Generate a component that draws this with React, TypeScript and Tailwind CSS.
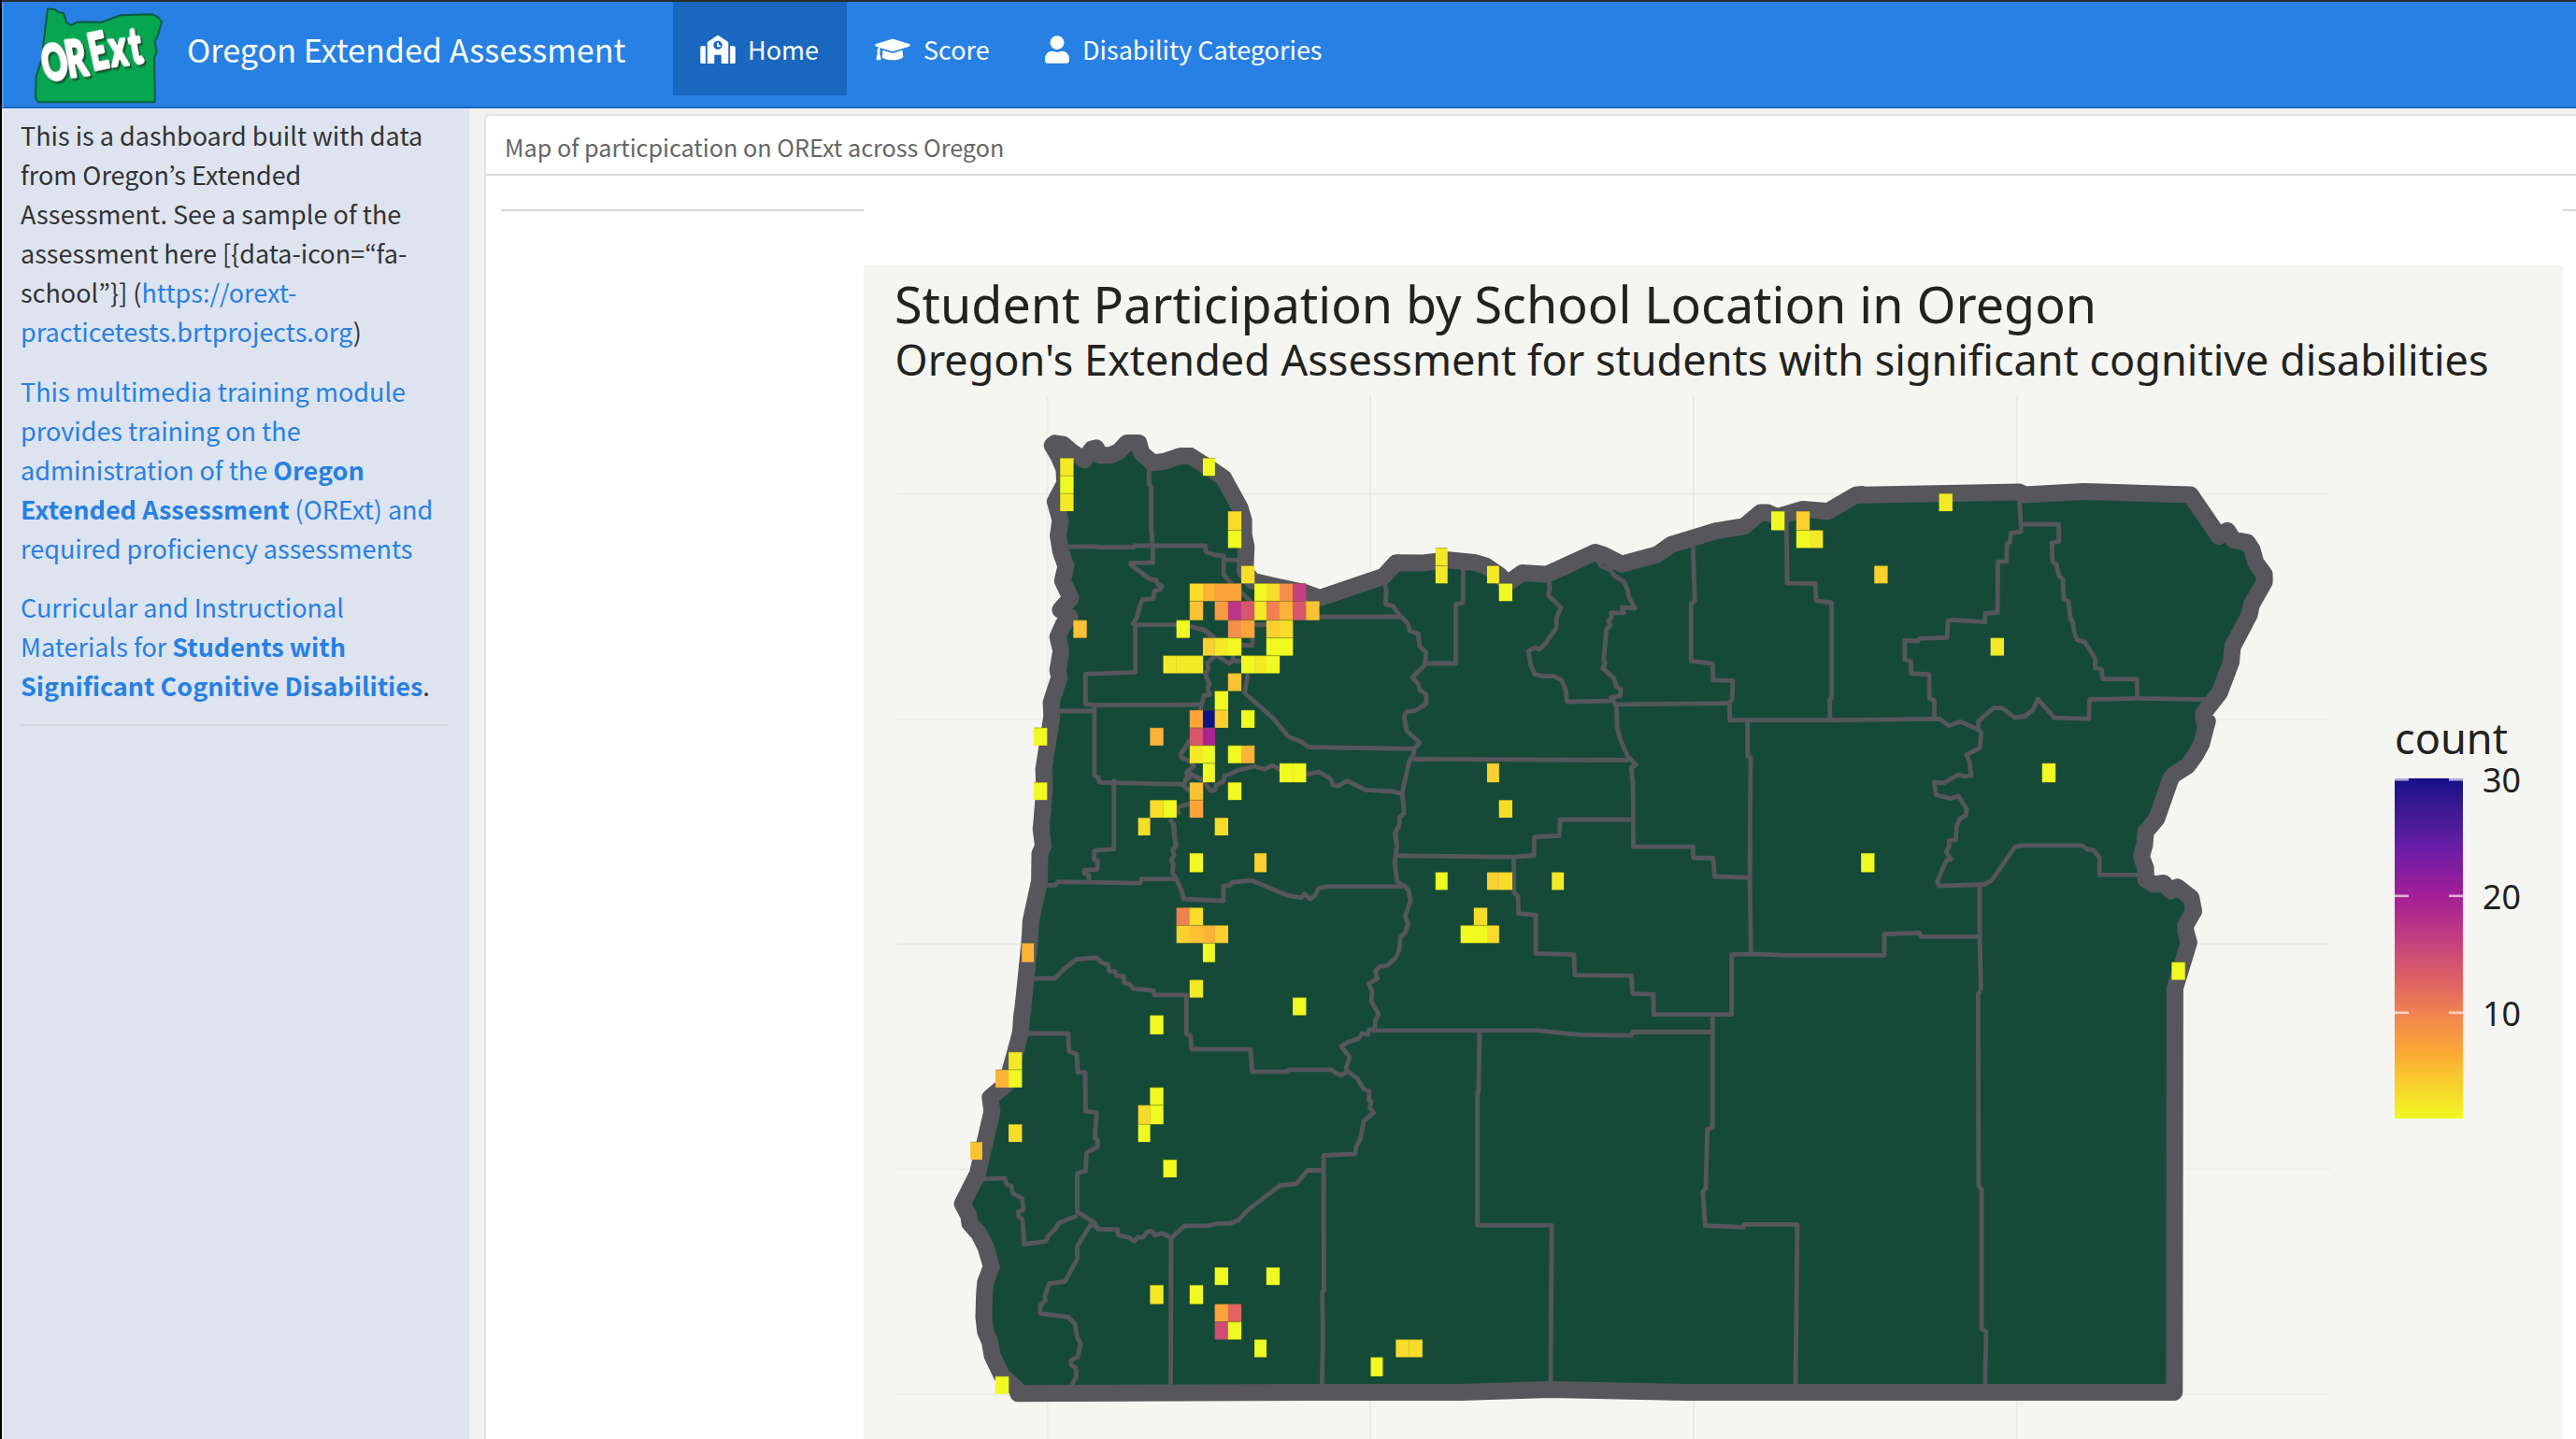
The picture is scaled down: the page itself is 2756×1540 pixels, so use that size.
import React from "react";
import { FaGraduationCap, FaSchool, FaUser } from "react-icons/fa";

type Frame = { x: number; y: number; sx: number; sy: number };

const NW: Frame = { x: 1000, y: 430, sx: 1568 / 620, sy: 3 };
const SW: Frame = { x: 1000, y: 880, sx: 2.8, sy: 1568 / 660 };
const MID: Frame = { x: 1500, y: 500, sx: 1568 / 620, sy: 2.45 };
const NE: Frame = { x: 1850, y: 480, sx: 1568 / 620, sy: 2.45 };
const SE: Frame = { x: 1400, y: 1060, sx: 1568 / 960, sy: 3 };
const METRO: Frame = { x: 1200, y: 600, sx: 3, sy: 3 };

const place = (f: Frame, pts: string) =>
  pts
    .trim()
    .split(/\s+/)
    .map((p) => {
      const [a, b] = p.split(",").map(Number);
      return `${(f.x + a / f.sx).toFixed(1)},${(f.y + b / f.sy).toFixed(1)}`;
    })
    .join(" ");

const OUTLINE = [
  place(
    NW,
    "325,133 348,137 370,160 405,187 425,152 437,148 448,172 475,172 498,160 520,132 552,132 560,165 590,196 620,192 665,174 692,174 740,210 782,245 826,340 836,380 836,425 843,465 840,545 860,575 920,592 1000,612 1042,630 1215,560 1248,517"
  ),
  place(
    MID,
    "60,251 125,243 195,250 225,258 262,282 285,305 325,277 392,281 523,223 545,230 595,254 690,229 728,203 850,167 925,155 970,119 990,119 1015,130 1085,110 1152,116 1228,73 1245,71"
  ),
  place(
    NE,
    "355,122 785,114 800,121 960,113 1248,121 1325,230 1348,215 1365,240 1402,246 1415,265 1425,300 1448,330 1448,350 1413,410 1408,435 1362,520 1358,560 1327,640 1283,695 1284,712 1294,715 1278,775 1262,803 1240,832 1203,855 1195,865 1157,970 1127,1005 1124,1040 1115,1070 1127,1100 1127,1130 1150,1143 1175,1139 1195,1160 1213,1150 1250,1178 1257,1213 1235,1250 1235,1265 1244,1295 1206,1415"
  ),
  place(SE, "1513,1290 660,1290 423,1281 265,1290 0,1290"),
  place(
    SW,
    "250,1452 245,1440 200,1405 172,1355 165,1320 152,1295 147,1258 149,1200 152,1170 170,1130 153,1080 132,1045 105,1020 102,1000 83,970 128,895 172,735 166,700 215,665 240,590 257,535 261,490 264,475 284,310 288,250 314,150 315,80 325,60 318,15"
  ),
  place(
    NW,
    "288,1370 297,1240 295,1180 317,1010 315,965 337,885 333,860 342,800 333,755 348,715 366,690 340,668 368,630 346,575 355,528 341,480 334,430 340,380 326,320 352,262 350,215 335,175 318,140"
  ),
].join(" ");

const COUNTIES: string[] = [
  place(NW, "580,200 580,265 586,272 586,410 590,462 590,517 530,517 530,523 583,570 600,572 603,585 615,592 608,603 594,607 592,632 562,635 555,655 548,690 537,712 543,717 543,868 408,874 408,970 432,974 720,972"),
  place(NW, "350,466 435,464 440,467 538,467 540,462 732,462 734,482 760,492 782,494 782,555 800,580 850,635 866,655"),
  place(NW, "782,508 822,508"),
  place(NW, "543,716 653,716 690,720 732,735 755,760"),
  place(METRO, "230,215 268,222 300,250"),
  place(METRO, "300,300 345,330 357,322 385,322"),
  place(METRO, "357,300 357,322"),
  place(METRO, "300,305 275,330 278,350 268,362 282,395 276,410 283,430 265,432 255,465 253,480"),
  place(METRO, "385,272 420,272 420,240"),
  place(METRO, "405,362 395,425 485,505 535,565 580,583 600,600"),
  place(METRO, "218,575 205,600 190,620 192,632 222,645 232,660 208,680 213,700 195,720"),
  place(METRO, "200,705 213,695 230,690 262,705"),
  place(METRO, "420,206 470,206"),
  place(NW, "338,993 432,993"),
  place(NW, "432,974 432,1200 442,1205 446,1222 670,1228 690,1250"),
  place(NW, "1035,690 1258,690"),
  place(NW, "680,1190 700,1198 727,1215 745,1248 757,1248 762,1230 780,1220 785,1200 800,1195 820,1183 865,1170 892,1180 915,1167 935,1182 1006,1196 1040,1188 1070,1210 1078,1230 1092,1234 1115,1217 1165,1246 1235,1251 1265,1258"),
  place(NW, "690,1290 655,1302 662,1325"),
  place(NW, "636,1340 648,1360 650,1400 654,1430"),
  place(SW, "714,0 717,30 723,60 713,70 717,85 708,97 715,105 712,128 725,145 740,175 746,195 865,200 865,162 885,160 890,152 950,148 1060,187 1098,192 1108,182 1125,196 1140,185 1150,168 1180,163 1400,163"),
  place(NW, "1215,570 1222,605 1220,650 1240,655 1258,685 1280,712 1285,735 1308,745 1312,785 1330,805 1326,845 1292,885 1308,905 1312,925 1330,940 1330,970 1300,992 1277,995 1270,1010 1277,1055 1312,1095 1297,1115 1297,1130 1285,1150 1265,1255 1270,1320 1258,1335 1258,1358"),
  place(NW, "1258,1358 1245,1385 1249,1420"),
  place(SW, "1393,5 1380,25 1385,60 1378,100 1385,150 1410,163 1420,175 1425,200 1410,238 1418,258 1410,280 1395,292 1392,325 1380,345 1355,365 1335,366 1320,378 1326,398 1300,410 1310,430 1308,455 1330,488 1320,505 1318,525 1300,528 1298,540 1280,537 1270,550 1240,558 1218,570 1243,597 1232,625 1240,635 1265,650 1285,678 1302,685 1300,705 1308,710 1303,725 1315,738 1285,760 1275,805 1262,825 1260,843 1165,847 1166,1190 1161,1195 1163,1310 1160,1430"),
  place(NW, "1430,535 1430,645 1410,650 1410,840 1330,840"),
  place(NW, "1012,1109 1297,1114"),
  place(NW, "1290,1148 1350,1148"),
  place(MID, "25,765 612,768"),
  place(SW, "330,160 362,160 370,151 615,155 620,144 722,144"),
  place(SW, "537,-110 537,68 478,72 478,95 488,98 487,120 448,122 448,130 462,135 462,150"),
  place(SW, "290,397 360,397 385,375 425,348 485,344 500,357 520,362 522,378 540,380 545,390 566,392 568,408 585,412 595,423 655,428 658,439 754,439 754,538 767,543 770,577 946,577 951,634 1055,634 1060,629 1190,629 1200,637 1217,643 1235,635"),
  place(SW, "265,537 400,537 402,582 426,590 428,635 451,636 452,735 485,738 480,803 488,808 488,825 455,840 452,887 427,892 427,990 478,1018 490,1035 548,1035 550,1050 580,1055 598,1065 608,1055 625,1055 635,1042 650,1039 660,1050 680,1045 695,1050 708,1058 748,1026 815,1026 848,1020 885,1020 910,1012 935,988 1035,923 1083,920 1117,885 1165,885"),
  place(SW, "140,907 210,905 215,920 230,925 234,943 262,957 266,985 250,990 252,1003 263,1010 268,1073 333,1065 340,1052 365,1030 370,1020 427,1000"),
  place(SW, "470,1020 427,1078 427,1110 390,1168 343,1173 330,1205 332,1215 316,1228 316,1249 400,1258 420,1275 427,1310 437,1325 428,1360 408,1368 410,1380 422,1387 425,1410 410,1430"),
  place(SW, "470,1020 490,1035"),
  place(SW, "708,1058 707,1435"),
  place(SW, "1385,85 1420,85"),
  place(MID, "0,1019 300,1022 357,1018 358,970 425,966 428,924 625,924"),
  place(MID, "-80,1477 370,1477 478,1488 620,1490 625,1481 838,1481"),
  place(MID, "395,290 400,318 395,335 430,368 418,395 417,422 388,462 372,478 360,473 342,482 348,520 360,543 380,548 410,548 432,558 443,585 446,615 565,613"),
  place(MID, "525,240 540,260 565,270 575,285 600,300 610,320 613,338 630,370 595,367 600,382 565,382 567,395 558,403 563,415 553,425 548,480 545,505 550,513 543,527 573,553 580,575 592,582 590,600 565,604 580,625 582,680 590,712 600,735 612,760 633,780 620,788 625,830 626,995 787,995 788,1024 842,1025 846,1073 940,1076"),
  place(MID, "575,622 885,619"),
  place(MID, "787,200 792,350 782,358 782,508 840,515 842,558 895,560 893,610 886,617 887,663 1160,663 1455,660 1480,678 1510,667 1565,690"),
  place(MID, "1040,130 1042,304 1118,305 1120,350 1162,355 1162,605 1157,610 1158,660"),
  place(MID, "935,665 935,758 943,762 941,1075 944,1275"),
  place(MID, "302,1022 303,1115 314,1125 315,1170 362,1174 362,1275 465,1278 467,1332 620,1333 624,1380 680,1382 681,1435 892,1435 892,1278 944,1276 1040,1280 1305,1280 1305,1224 1400,1221 1405,1231 1562,1231"),
  place(NE, "785,125 790,218 762,222 760,245 752,250 750,296 727,297 726,430 692,432 692,455 605,449 592,452 590,496 515,498 510,505 475,503 475,553 492,558 493,590 541,592 542,655 555,660 555,710"),
  place(NE, "790,198 892,199 892,244 873,247 875,297 885,303 893,335 903,342 905,395 918,400 923,445 930,455 933,480 942,502 962,507 990,550 990,575 1008,580 1010,604 1103,605 1105,655"),
  place(NE, "672,735 675,715 715,680 738,680 772,705 800,702 822,685 835,657 880,706 973,709 975,658 1105,655 1295,658"),
  place(NE, "672,735 682,745 678,785 642,803 650,820 655,857 637,860 620,855 580,877 555,875 560,908 600,918 620,911 643,945 640,962 625,970 615,990 613,1026 595,1028 595,1043 587,1057 600,1077 588,1080 563,1135 568,1147 690,1143 710,1133 773,1045 790,1041 955,1041 970,1051 985,1053 1002,1072 1002,1118 1110,1118"),
  place(NE, "678,1147 678,1280 681,1420"),
  place(SE, "299,130 297,325 295,328 295,754 425,754 423,1270"),
  place(SE, "706,78 706,440 697,445 694,635 689,645 693,755 760,760 762,751 854,751 851,1270"),
  place(SE, "1174,0 1170,12 1171,628 1176,638 1176,1085 1184,1095 1182,1270"),
];

const RAMP: Record<string, string> = {
  a: "#f0f921",
  b: "#f3e926",
  c: "#f7dc2a",
  d: "#facf30",
  e: "#fcc234",
  f: "#fdb338",
  g: "#fca439",
  h: "#f99942",
  i: "#f48f4b",
  j: "#f08252",
  k: "#e16462",
  l: "#d9576c",
  m: "#d04c74",
  n: "#c5407e",
  o: "#bd3686",
  p: "#aa2395",
  q: "#0d1387",
};

// Occupied bins, "column:shade" per grid row.
const BINS: Record<number, string> = {
  0: "-10b 1a",
  1: "-10a",
  2: "-10b 58b",
  3: "3c 45a 47d",
  4: "3a 47a 48b",
  5: "19b",
  6: "4c 19b 23b 53d",
  7: "0c 1f 2g 3g 5a 6c 7i 8n 24a",
  8: "0e 2h 3o 4l 5b 6j 7f 8l 9e",
  9: "-9e -1a 3i 4g 6d 7c",
  10: "1d 2b 3a 6a 7a 62b",
  11: "-2b -1b 0b 4a 5b 6a",
  12: "3e",
  13: "2a",
  14: "0g 1q 2d 4a",
  15: "-12a -3f 0l 1p",
  16: "0b 1a 3a 4f",
  17: "1a 7a 8a 23d 66a",
  18: "-12a 0e 3a",
  19: "-3c -2a 0g 24c",
  20: "-4c 2c",
  22: "0a 5d 52a",
  23: "19a 23d 24c 28b",
  25: "-1j 0c 22c",
  26: "-1d 0e 1f 2d 21a 22a 23c",
  27: "-13f 1a",
  28: "76a",
  29: "0b",
  30: "8a",
  31: "-3a",
  33: "-14b",
  34: "-15f -14a",
  35: "-3a",
  36: "-4c -3a",
  37: "-14c -4a",
  38: "-17e",
  39: "-2a",
  45: "2a 6a",
  46: "-3b 0a",
  47: "2g 3k",
  48: "2m 3a",
  49: "5a 16c 17c",
  50: "14a",
  51: "-15a",
};

const binX = (c: number) => 1272.8 + 1.414 * (9 * c + Math.floor(0.78 * c + 0.27));
const binY = (r: number) => 490.2 + 1.458 * (13 * r + Math.floor(0.213 * r + 0.2));

function Bins() {
  return (
    <g>
      {Object.entries(BINS).flatMap(([row, cells]) =>
        cells.split(" ").map((cell) => {
          const r = Number(row);
          const c = Number(cell.slice(0, -1));
          const x = binX(c);
          const y = binY(r);
          return (
            <g key={`${row}/${cell}`}>
              <rect x={x} y={y} width={binX(c + 1) - x + 0.2} height={binY(r + 1) - y} fill={RAMP[cell.slice(-1)]} />
              <rect x={x} y={y - 0.4} width={binX(c + 1) - x} height={1} fill="#5a6a10" fillOpacity={0.4} />
            </g>
          );
        })
      )}
    </g>
  );
}

function ParticipationMap() {
  return (
    <svg className="block h-[1256px] w-[1818px] shrink-0 bg-[#f5f5f1]" viewBox="924 284 1818 1256">
      <g fill="#22221e" fontFamily="'Noto Sans', 'Open Sans', sans-serif">
        <text x={957} y={346} fontSize={54} textLength={1286} lengthAdjust="spacingAndGlyphs">
          Student Participation by School Location in Oregon
        </text>
        <text x={957.5} y={401.5} fontSize={46} textLength={1705} lengthAdjust="spacingAndGlyphs">
          Oregon's Extended Assessment for students with significant cognitive disabilities
        </text>
        <text x={2562} y={807} fontSize={46} textLength={121} lengthAdjust="spacingAndGlyphs">
          count
        </text>
        <text x={2656} y={848} fontSize={37} textLength={41} lengthAdjust="spacingAndGlyphs">
          30
        </text>
        <text x={2656} y={972.5} fontSize={37} textLength={41} lengthAdjust="spacingAndGlyphs">
          20
        </text>
        <text x={2656} y={1097.5} fontSize={37} textLength={41} lengthAdjust="spacingAndGlyphs">
          10
        </text>
      </g>
      <g stroke="#ebebe7" strokeWidth={2}>
        {[1120.5, 1466, 1812, 2158].map((x) => (
          <line key={x} x1={x} x2={x} y1={423} y2={1540} />
        ))}
        {[528.5, 769.5, 1010.3, 1251.3, 1492.5].map((y) => (
          <line key={y} x1={959} x2={2492} y1={y} y2={y} />
        ))}
      </g>
      <polygon points={OUTLINE} fill="#164a38" stroke="#56565b" strokeWidth={18} strokeLinejoin="round" />
      <g fill="none" stroke="#56565b" strokeWidth={4.8} strokeLinejoin="round">
        {COUNTIES.map((points, i) => (
          <polyline key={i} points={points} />
        ))}
      </g>
      <Bins />
      <defs>
        <linearGradient id="plasma" x1="0" y1="0" x2="0" y2="1">
          <stop offset="0" stopColor="#150f88" />
          <stop offset="0.1" stopColor="#3f1a94" />
          <stop offset="0.2" stopColor="#671da8" />
          <stop offset="0.345" stopColor="#a41e96" />
          <stop offset="0.45" stopColor="#be3884" />
          <stop offset="0.52" stopColor="#cd4c76" />
          <stop offset="0.6" stopColor="#e06362" />
          <stop offset="0.69" stopColor="#f08352" />
          <stop offset="0.8" stopColor="#fca636" />
          <stop offset="0.9" stopColor="#f7d02e" />
          <stop offset="1" stopColor="#f0f921" />
        </linearGradient>
      </defs>
      <rect x={2562} y={833} width={73} height={364} fill="url(#plasma)" />
      <g fill="#fff" fillOpacity={0.65}>
        {[833, 957.5, 1082.5].map((y) => (
          <React.Fragment key={y}>
            <rect x={2562} y={y} width={15} height={2.6} />
            <rect x={2620} y={y} width={15} height={2.6} />
          </React.Fragment>
        ))}
      </g>
    </svg>
  );
}

function Logo() {
  return (
    <svg className="block h-[112px] w-[140px] shrink-0" viewBox="36 2 140 112">
      <path
        d="M51 9.500l8 .5 3 3 6 1 3 10 5 3 7-3.500 26 .3 8-3 12-4.500 34-1 6 3 4 5-4 14-3.500 7 2 12-2.500 5 .8 48H41l-3-5 .5-22 6-18 2.500-22z"
        fill="#06a651"
        stroke="#0a5c3c"
        strokeWidth={2}
        strokeLinejoin="round"
      />
      <text
        className="drop-shadow-[2px_2px_1px_#12351f]"
        transform="translate(49 88) rotate(-12) scale(.62 1)"
        x="0 41 84 118 153"
        y="0 0 -2 -2 0"
        rotate="0 3 0 4 3"
        fontFamily="Lato, 'Open Sans', sans-serif"
        fontWeight={900}
        fontSize={54}
        fill="#fff"
        stroke="#fff"
        strokeWidth={3.5}
        strokeLinejoin="round"
      >
        ORExt
      </text>
    </svg>
  );
}

export default function App() {
  return (
    <div className="flex h-[1540px] w-[2756px] flex-col overflow-hidden border-l-2 border-black bg-[#f2f2f2] font-['Noto_Sans_CJK_KR','Open_Sans',sans-serif]">
      <div className="-ml-0.5 h-0.5 shrink-0 bg-[#2b2b2b]" />
      <nav className="flex h-[114px] shrink-0 items-start border-b-2 border-l-2 border-b-[#1967be] border-l-[#4d96e6] bg-[#2780e3] text-white">
        <div className="ml-8 w-[164px]">
          <Logo />
        </div>
        <div className="h-[100px] w-[520px] text-[34.15px] leading-[100px] whitespace-nowrap">Oregon Extended Assessment</div>
        <div className="flex h-[100px] text-[27px] leading-[102px] whitespace-nowrap">
          <div className="flex w-[186px] items-start bg-[#1967be] pl-[29px]">
            <FaSchool className="mt-[36px] mr-[13px] h-[30px] w-[38px]" />
            Home
          </div>
          <div className="flex w-[182px] items-start pl-[30px]">
            <FaGraduationCap className="mt-[36px] mr-[14px] h-[30px] w-[38px]" />
            Score
          </div>
          <div className="flex items-start pl-[30px]">
            <FaUser className="mt-[36px] mr-[14px] h-[30px] w-[26px]" />
            Disability Categories
          </div>
        </div>
      </nav>
      <div className="flex min-h-0 flex-1">
        <aside className="w-[500px] shrink-0 border-r-2 border-l-2 border-l-[#e6ebf4] border-r-[#e2e3e5] bg-[#dde4f0] pt-2 pl-[18px] text-[27px] leading-[42px] whitespace-nowrap text-[#333]">
          <p className="mb-[22px]">
            This is a dashboard built with data
            <br />
            from Oregon’s Extended
            <br />
            Assessment. See a sample of the
            <br />
            assessment here [{"{"}data-icon=“fa-
            <br />
            school”{"}"}] (<span className="text-[#2780e3]">https://orext-</span>
            <br />
            <span className="text-[#2780e3]">practicetests.brtprojects.org</span>)
          </p>
          <p className="mb-[21px] text-[#2780e3]">
            This multimedia training module
            <br />
            provides training on the
            <br />
            administration of the <b>Oregon</b>
            <br />
            <b>Extended Assessment</b> (ORExt) and
            <br />
            required proficiency assessments
          </p>
          <p className="text-[#2780e3]">
            Curricular and Instructional
            <br />
            Materials for <b>Students with</b>
            <br />
            <b>Significant Cognitive Disabilities</b>
            <span className="text-[#333]">.</span>
          </p>
          <div className="mt-[20px] h-0.5 w-[458px] bg-[#d3d5da]" />
        </aside>
        <main className="mt-1.5 ml-4 flex flex-1 flex-col overflow-hidden rounded-tl-md border-t-2 border-l-2 border-[#e2e2e2] bg-white">
          <div className="h-[64px] shrink-0 border-b-2 border-[#d8d8d8] pl-[20px] text-[25.2px] leading-[67px] whitespace-nowrap text-[#666]">
            Map of particpication on ORExt across Oregon
          </div>
          <div className="flex pt-9 pl-4">
            <div className="h-0.5 w-[388px] bg-[#d8d8d8]" />
            <div className="w-[1818px] shrink-0 pt-[60px]">
              <ParticipationMap />
            </div>
            <div className="h-0.5 w-[14px] bg-[#d8d8d8]" />
          </div>
        </main>
      </div>
    </div>
  );
}
